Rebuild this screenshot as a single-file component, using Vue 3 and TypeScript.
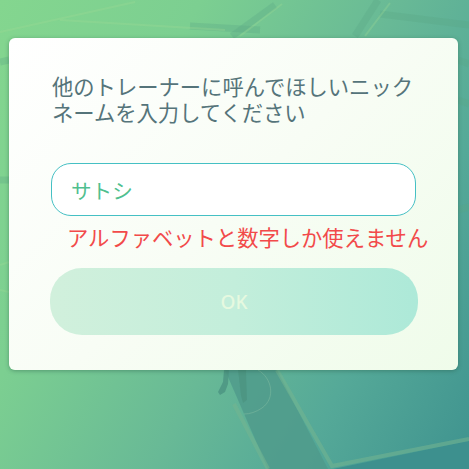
<script setup lang="ts">
const promptLines: string[] = ['他のトレーナーに呼んでほしいニック', 'ネームを入力してください']
const nickname = 'サトシ'
const errorText = 'アルファベットと数字しか使えません'

const roads: string[] = [
  'M232 36 L275 5', 'M355 36 L378 0', 'M190 26 L260 30', 'M380 14 L469 25',
  'M0 62 L9 60', 'M458 100 L469 104', 'M458 210 L469 207',
  'M0 180 L9 180', 'M458 60 L469 64',
]
const lightRoads: string[] = [
  'M0 32 L135 2', 'M60 20 L225 30', 'M240 36 L282 4', 'M365 36 L390 3',
  'M0 290 L9 292', 'M0 265 L9 262',
]
</script>

<template>
  <main class="screen">
    <svg class="map" viewBox="0 0 469 469" aria-hidden="true">
      <g class="roads">
        <path v-for="road in roads" :key="road" :d="road" />
      </g>
      <g class="light-roads">
        <path v-for="road in lightRoads" :key="road" :d="road" />
      </g>
      <path class="corner" d="M333 469 L469 441 L469 469 Z" />
      <path class="path-wide" d="M225 370 L277 370 L328 469 L268 469 Z" />
      <path class="path-edge" d="M277 370 L332 466 L469 439" />
      <path class="path-edge" d="M234 404 L268 469" />
      <path class="ring" d="M258 370 C 272 378 276 398 262 408 C 256 412 250 414 244 414" />
      <g class="trainer">
        <path d="M224 370 L229 370 L228 384 L225 392 L220 395 L218 392 L223 382 Z" />
        <path d="M238 370 L246 370 L247 400 L243 403 L241 396 Z" />
      </g>
    </svg>

    <section class="dialog">
      <p class="prompt">
        <span v-for="line in promptLines" :key="line" class="prompt-line">{{ line }}</span>
      </p>
      <div class="field">{{ nickname }}</div>
      <p class="error">{{ errorText }}</p>
      <button class="ok" type="button" disabled>OK</button>
    </section>
  </main>
</template>

<style>
html, body { margin: 0; padding: 0; }
</style>

<style scoped>
.screen {
  position: relative;
  width: 469px;
  height: 469px;
  overflow: hidden;
  padding: 38px 11px 0 9px;
  box-sizing: border-box;
  background: linear-gradient(118deg, #84d68f 0%, #7ccf91 28%, #68b996 56%, #55a998 76%, #3f938f 100%);
  font-family: "Noto Sans CJK JP", "Noto Sans", sans-serif;
}
.map { position: absolute; inset: 0; width: 469px; height: 469px; filter: blur(.7px); }
.roads path { fill: none; stroke: #5aa783; stroke-opacity: .3; stroke-width: 7; }
.light-roads path { fill: none; stroke: #9fdb94; stroke-opacity: .3; stroke-width: 2; }
.corner { fill: #3d908e; }
.path-wide { fill: #4f9a8b; fill-opacity: .8; }
.path-edge { fill: none; stroke: #74b48f; stroke-opacity: .55; stroke-width: 4; }
.ring { fill: none; stroke: #8ec4a6; stroke-opacity: .4; stroke-width: 1; }
.trainer path { fill: #4c9582; fill-opacity: .85; }
.dialog {
  position: relative;
  height: 332px;
  box-sizing: border-box;
  padding: 35px 41px 0 41px;
  display: flex;
  flex-direction: column;
  border-radius: 6px;
  background: linear-gradient(135deg, #ffffff 0%, #f8fdf5 50%, #effcea 100%);
  box-shadow: 0 1px 4px rgba(40, 90, 70, .45);
}
.prompt { margin: 0 0 0 2px; color: #55747a; font-size: 21.3px; line-height: 26px; white-space: nowrap; }
.prompt-line { display: block; }
.field {
  margin: 38px 0 0 1px;
  width: 365px;
  height: 53px;
  box-sizing: border-box;
  padding-left: 19px;
  display: flex;
  align-items: center;
  border: 1.5px solid #45c0c4;
  border-radius: 20px;
  background: #fff;
  color: #4fbf8f;
  font-size: 20.6px;
}
.error {
  margin: 4px 0 0 17px;
  color: #f24a4a;
  font-size: 21.3px;
  line-height: 33px;
  white-space: nowrap;
}
.ok {
  margin-top: 15px;
  width: 368px;
  height: 67px;
  padding: 0;
  border: 0;
  border-radius: 32px;
  background: linear-gradient(90deg, #d1f0dc 0%, #c3eedb 50%, #ade9d8 100%);
  color: #e6f9e0;
  font-family: "Noto Sans", sans-serif;
  font-size: 19px;
  font-weight: 500;
}
</style>
